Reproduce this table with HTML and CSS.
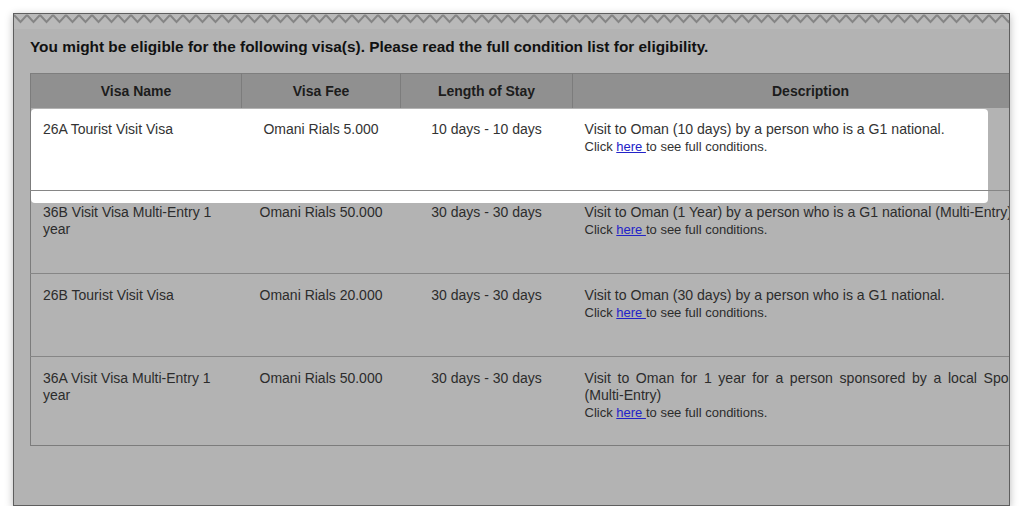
FILE: index.html
```html
<!DOCTYPE html>
<html>
<head>
<meta charset="utf-8">
<link rel="stylesheet" href="styles.css">
</head>
<body>
<div class="frame">
  <div class="zigzag">
    <svg width="1000" height="16" xmlns="http://www.w3.org/2000/svg">
      <defs>
        <pattern id="zz" x="0" y="0" width="13" height="16" patternUnits="userSpaceOnUse">
          <polyline points="0,3 6.5,10 13,3" fill="none" stroke="#858585" stroke-width="2"/>
        </pattern>
      </defs>
      <rect x="0" y="0" width="1000" height="16" fill="url(#zz)"/>
    </svg>
  </div>
  <div class="spotlight"></div>
  <p class="title">You might be eligible for the following visa(s). Please read the full condition list for eligibility.</p>
  <table class="visas">
    <thead>
      <tr>
        <th class="c1">Visa Name</th>
        <th class="c2">Visa Fee</th>
        <th class="c3">Length of Stay</th>
        <th class="c4">Description</th>
      </tr>
    </thead>
    <tbody>
      <tr class="first">
        <td class="name">26A Tourist Visit Visa</td>
        <td class="center">Omani Rials 5.000</td>
        <td class="center">10 days - 10 days</td>
        <td class="desc"><div class="d-main">Visit to Oman (10 days) by a person who is a G1 national.</div><div class="d-link">Click <a href="#">here </a>to see full conditions.</div></td>
      </tr>
      <tr>
        <td class="name">36B Visit Visa Multi-Entry 1 year</td>
        <td class="center">Omani Rials 50.000</td>
        <td class="center">30 days - 30 days</td>
        <td class="desc"><div class="d-main">Visit to Oman (1 Year) by a person who is a G1 national (Multi-Entry)</div><div class="d-link">Click <a href="#">here </a>to see full conditions.</div></td>
      </tr>
      <tr>
        <td class="name">26B Tourist Visit Visa</td>
        <td class="center">Omani Rials 20.000</td>
        <td class="center">30 days - 30 days</td>
        <td class="desc"><div class="d-main">Visit to Oman (30 days) by a person who is a G1 national.</div><div class="d-link">Click <a href="#">here </a>to see full conditions.</div></td>
      </tr>
      <tr>
        <td class="name">36A Visit Visa Multi-Entry 1 year</td>
        <td class="center">Omani Rials 50.000</td>
        <td class="center">30 days - 30 days</td>
        <td class="desc"><div class="d-main">Visit to Oman for 1 year for a person sponsored by a local Sponsor (Multi-Entry)</div><div class="d-link">Click <a href="#">here </a>to see full conditions.</div></td>
      </tr>
    </tbody>
  </table>
</div>
</body>
</html>
```
FILE: styles.css
```css
html, body {
  margin: 0;
  padding: 0;
  background: #ffffff;
  font-family: "Liberation Sans", Arial, sans-serif;
}

.frame {
  position: relative;
  margin: 13px 0 0 13px;
  width: 995px;
  height: 491px;
  border: 1px solid #5e5e5e;
  background: #b3b3b3;
  box-shadow: 0 2px 8px rgba(0, 0, 0, 0.28);
  overflow: hidden;
}

.zigzag {
  height: 15px;
  overflow: hidden;
  background: #b9b9b9;
}

.zigzag svg {
  display: block;
  margin-top: -2px;
}

.spotlight {
  position: absolute;
  left: 17px;
  top: 95px;
  width: 957px;
  height: 94px;
  background: #ffffff;
  border-radius: 4px;
}

.title {
  position: relative;
  margin: 9px 0 0 16px;
  font-size: 15.4px;
  line-height: 18px;
  font-weight: bold;
  color: #111111;
}

.visas {
  position: relative;
  margin: 17px 0 0 16px;
  width: 1018px;
  border-collapse: collapse;
  table-layout: fixed;
  border-left: 1px solid #7c7c7c;
  border-bottom: 1px solid #7c7c7c;
  font-size: 14px;
}

.visas th {
  height: 34px;
  padding: 0;
  background: #909090;
  border-top: 1px solid #7e7e7e;
  border-right: 1px solid #7c7c7c;
  color: #1c1c1c;
  font-weight: bold;
  font-size: 14px;
  text-align: center;
  vertical-align: middle;
}

.visas th.c1 { width: 210px; }
.visas th.c2 { width: 158px; }
.visas th.c3 { width: 171px; }
.visas th.c4 { border-right: none; }

.visas td {
  height: 45px;
  padding: 13px 12px 24px 12px;
  vertical-align: top;
  line-height: 17px;
  color: #2c2c2c;
  border-top: 1px solid #868686;
}

.visas tr.first td {
  color: #333333;
  border-top: none;
  height: 45px;
}

.visas td.center {
  text-align: center;
}

.visas td.desc {
  text-align: justify;
  font-size: 14.1px;
}

.d-link {
  font-size: 13px;
  line-height: 17px;
}

.d-link a {
  color: #2323c8;
  text-decoration: underline;
}
```
